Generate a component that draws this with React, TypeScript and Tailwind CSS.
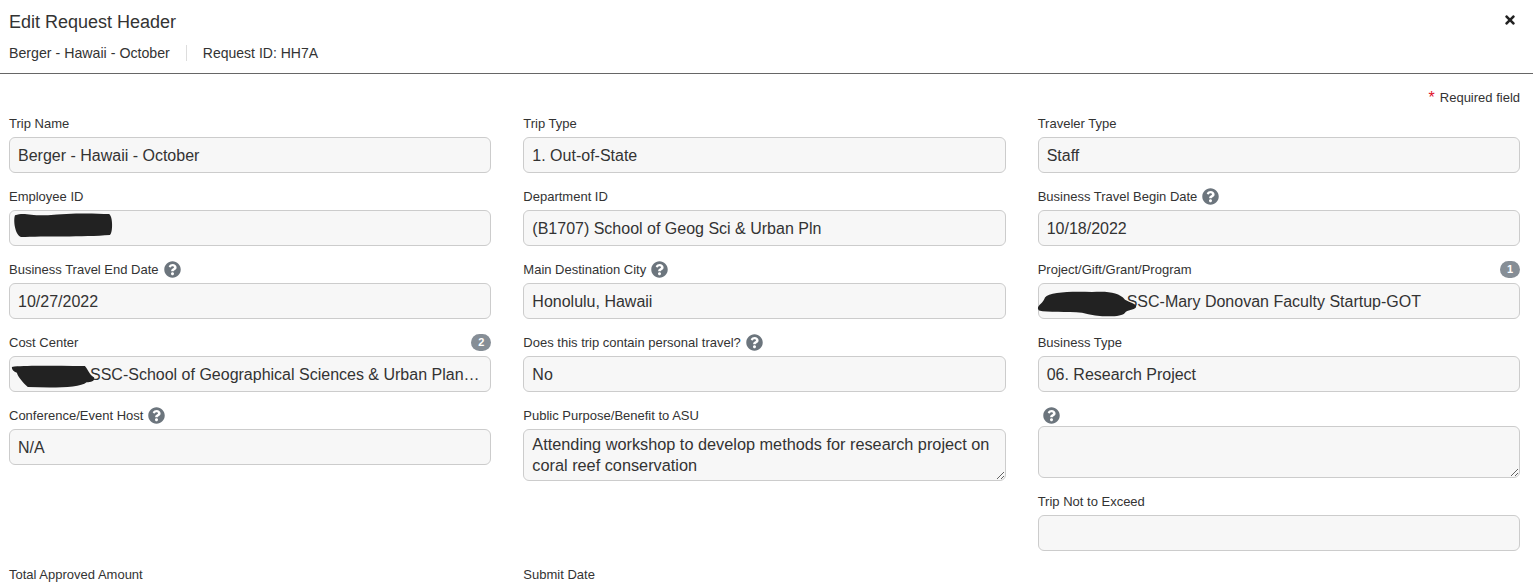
import { FaQuestionCircle, FaTimes } from "react-icons/fa";

const Help = () => <FaQuestionCircle className="text-[#6c757d] text-[17px] shrink-0" />;

const Badge = ({ n }: { n: number }) => (
  <span className="ml-auto flex h-[17px] w-5 items-center justify-center rounded-full bg-[#868e96] text-[11px] font-bold leading-none text-white">
    {n}
  </span>
);

const Label = ({ text, help, badge }: { text?: string; help?: boolean; badge?: number }) => (
  <div className="mb-[5px] flex h-[18px] items-center gap-[5px] text-[13px] leading-[18px] text-[#333]">
    {text && <span className="whitespace-nowrap pt-[2px]">{text}</span>}
    {help && <Help />}
    {badge !== undefined && <Badge n={badge} />}
  </div>
);

const boxClass =
  "relative h-9 w-full rounded-[6px] border border-[#ccc] bg-[#f7f7f7] text-[16px] leading-[35px] text-[#333]";

const Blob = ({ className, d }: { className: string; d: string }) => (
  <svg className={`absolute ${className}`} viewBox="0 0 100 24" preserveAspectRatio="none">
    <path d={d} fill="#222" />
  </svg>
);

const Field = ({
  label,
  value,
  help,
  badge,
  pad = "pl-2",
  children,
}: {
  label?: string;
  value?: string;
  help?: boolean;
  badge?: number;
  pad?: string;
  children?: React.ReactNode;
}) => (
  <div className="mb-[14px] min-w-0">
    <Label text={label} help={help} badge={badge} />
    <div className={boxClass}>
      <div className={`truncate pr-2 ${pad}`}>{value}</div>
      {children}
    </div>
  </div>
);

const areaClass =
  "block h-[52px] w-full rounded-[6px] border border-[#ccc] bg-[#f7f7f7] px-2 py-[4px] text-[16.3px] leading-[21px] text-[#333] outline-none";

export default function App() {
  return (
    <div className="h-[587px] overflow-hidden bg-white text-[#333] [font-family:'Liberation_Sans',Arial,sans-serif]">
      <header className="relative h-[74px] border-b border-[#666] pl-[9px]">
        <h1 className="pt-[11px] text-[18px] font-normal leading-[22px]">Edit Request Header</h1>
        <div className="mt-[10px] flex items-center text-[14.2px] leading-[20px]">
          <span>Berger - Hawaii - October</span>
          <span className="mx-4 h-4 w-px bg-[#ddd]" />
          <span className="text-[14px]">Request ID: HH7A</span>
        </div>
        <button className="absolute right-[16px] top-[13px] text-[14px] text-[#222]">
          <FaTimes />
        </button>
      </header>

      <div className="pl-[9px] pr-[13px]">
        <div className="flex h-[40px] items-end justify-end pb-[7px] text-[13px] leading-[18px]">
          <span className="mr-[5px] text-[16px] text-[#e0102a]">*</span>
          <span>Required field</span>
        </div>

        <div className="grid grid-cols-3 gap-x-8">
          <Field label="Trip Name" value="Berger - Hawaii - October" />
          <Field label="Trip Type" value="1. Out-of-State" />
          <Field label="Traveler Type" value="Staff" />

          <Field label="Employee ID">
            <Blob
              className="left-[3px] top-[1px] h-[25px] w-[100px]"
              d="M2 3 C12 0 18 4 35 3 C55 1 80 1 96 2 C100 4 100 20 97 22 C70 24 30 23 8 24 C2 22 0 8 2 3Z"
            />
          </Field>
          <Field label="Department ID" value="(B1707) School of Geog Sci & Urban Pln" />
          <Field label="Business Travel Begin Date" value="10/18/2022" help />

          <Field label="Business Travel End Date" value="10/27/2022" help />
          <Field label="Main Destination City" value="Honolulu, Hawaii" help />
          <Field label="Project/Gift/Grant/Program" value="SSC-Mary Donovan Faculty Startup-GOT" badge={1} pad="pl-[88px]">
            <Blob
              className="-left-[2px] top-[7px] h-[26px] w-[100px]"
              d="M8 6 C12 1 35 0 55 1 C70 0 82 1 88 8 C94 11 100 12 99 15 C97 18 90 17 88 20 C84 25 60 24 45 20 C30 19 10 20 2 18 C-2 14 6 12 8 6Z"
            />
          </Field>

          <Field
            label="Cost Center"
            value="SSC-School of Geographical Sciences & Urban Planning"
            badge={2}
            pad="pl-[80px]"
          >
            <Blob
              className="left-[1px] top-[8px] h-[23px] w-[84px]"
              d="M1 2 C15 0 50 1 88 1 C92 5 93 10 99 13 C100 17 95 18 90 18 C82 24 50 24 20 23 C14 18 8 12 7 8 C3 7 1 5 1 2Z"
            />
          </Field>
          <Field label="Does this trip contain personal travel?" value="No" help />
          <Field label="Business Type" value="06. Research Project" />

          <Field label="Conference/Event Host" value="N/A" help />
          <div className="mb-[11px] min-w-0">
            <Label text="Public Purpose/Benefit to ASU" />
            <textarea
              readOnly
              className={areaClass}
              defaultValue="Attending workshop to develop methods for research project on coral reef conservation"
            />
          </div>
          <div className="min-w-0">
            <div className="mb-[2px] flex h-[18px] items-center pl-[5px]">
              <Help />
            </div>
            <textarea readOnly className={areaClass} defaultValue="" />
          </div>

          <div className="col-start-3 mb-[14px] min-w-0">
            <Label text="Trip Not to Exceed" />
            <div className={boxClass} />
          </div>

          <Label text="Total Approved Amount" />
          <Label text="Submit Date" />
        </div>
      </div>
    </div>
  );
}
